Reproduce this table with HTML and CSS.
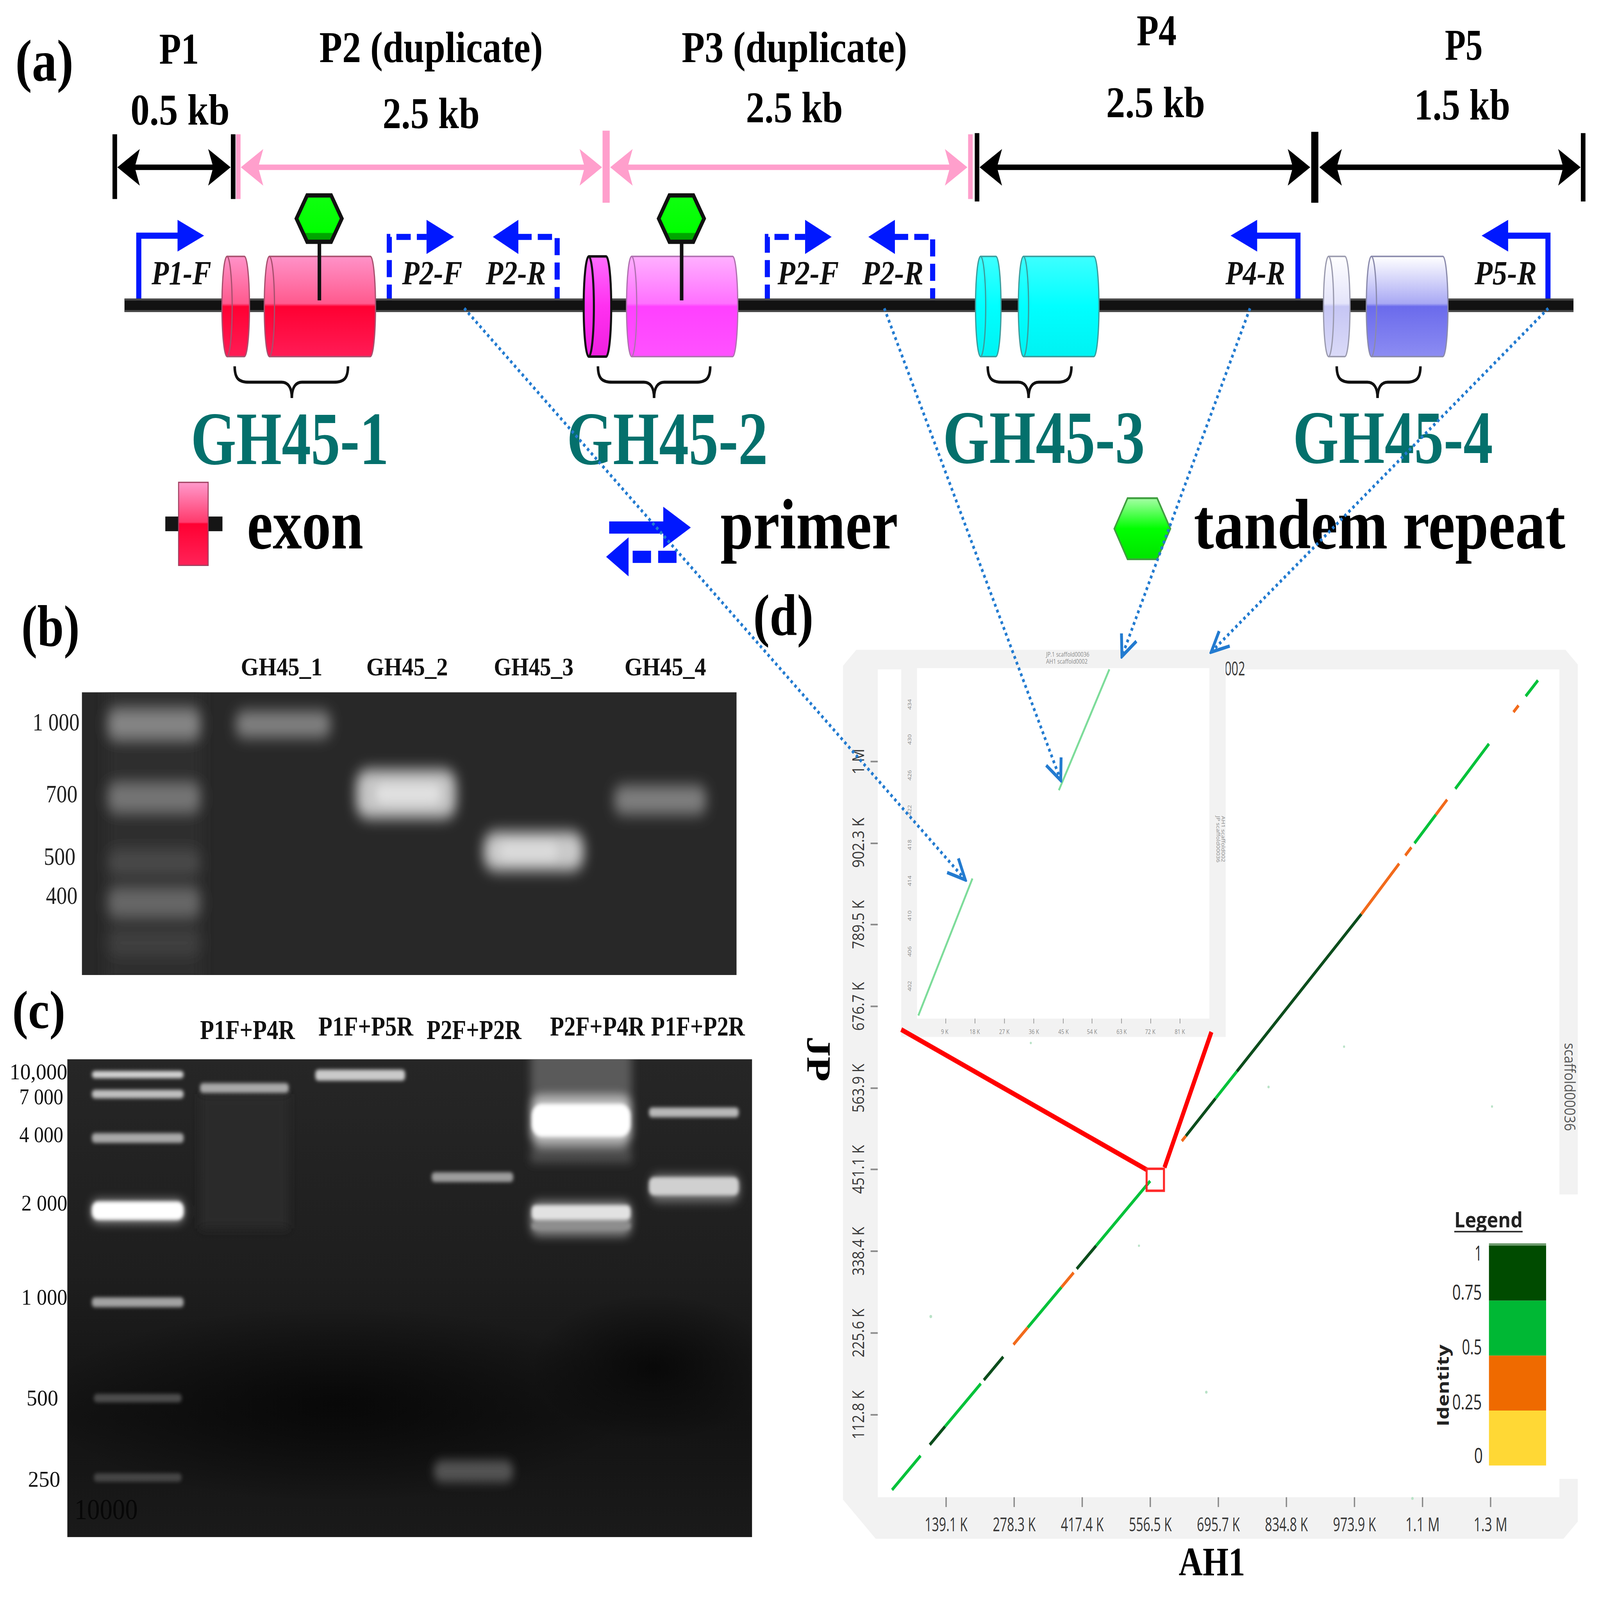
FILE: index.html
```html
<!DOCTYPE html>
<html lang="en">
<head>
<meta charset="utf-8">
<title>GH45 gene cluster figure</title>
<link rel="stylesheet" href="styles.css">
</head>
<body>
<div class="figure">

  <!-- ================= PANEL (a) ================= -->
  <svg class="panel panel-a" viewBox="0 0 1568 480" preserveAspectRatio="none">
    <defs>
      <linearGradient id="gRed" x1="0" y1="0" x2="0" y2="1">
        <stop offset="0" stop-color="#ff92c8"/>
        <stop offset="0.47" stop-color="#ff5a8e"/>
        <stop offset="0.5" stop-color="#ff0032"/>
        <stop offset="1" stop-color="#ff1c56"/>
      </linearGradient>
      <linearGradient id="gMagBig" x1="0" y1="0" x2="0" y2="1">
        <stop offset="0" stop-color="#ffb0ff"/>
        <stop offset="0.47" stop-color="#ff70ff"/>
        <stop offset="0.5" stop-color="#ff40ff"/>
        <stop offset="1" stop-color="#ff52ff"/>
      </linearGradient>
      <linearGradient id="gMagSmall" x1="0" y1="0" x2="0" y2="1">
        <stop offset="0" stop-color="#ff6cff"/>
        <stop offset="0.5" stop-color="#ff30f0"/>
        <stop offset="1" stop-color="#f020e0"/>
      </linearGradient>
      <linearGradient id="gCyan" x1="0" y1="0" x2="0" y2="1">
        <stop offset="0" stop-color="#3dffff"/>
        <stop offset="0.5" stop-color="#00ffff"/>
        <stop offset="1" stop-color="#00f2f2"/>
      </linearGradient>
      <linearGradient id="gLavSmall" x1="0" y1="0" x2="0" y2="1">
        <stop offset="0" stop-color="#ffffff"/>
        <stop offset="0.47" stop-color="#e4e4fa"/>
        <stop offset="0.5" stop-color="#c6c6f4"/>
        <stop offset="1" stop-color="#dadaf8"/>
      </linearGradient>
      <linearGradient id="gLavBig" x1="0" y1="0" x2="0" y2="1">
        <stop offset="0" stop-color="#ffffff"/>
        <stop offset="0.47" stop-color="#a9a9f4"/>
        <stop offset="0.5" stop-color="#6b6bec"/>
        <stop offset="1" stop-color="#8c8cf2"/>
      </linearGradient>
      <linearGradient id="gHex" x1="0" y1="0" x2="0" y2="1">
        <stop offset="0" stop-color="#10ff10"/>
        <stop offset="0.8" stop-color="#00ff00"/>
        <stop offset="0.82" stop-color="#00a800"/>
        <stop offset="1" stop-color="#00a000"/>
      </linearGradient>
      <linearGradient id="gHexLegend" x1="0" y1="0" x2="0" y2="1">
        <stop offset="0" stop-color="#a6ffa6"/>
        <stop offset="0.5" stop-color="#00ff00"/>
        <stop offset="1" stop-color="#00e400"/>
      </linearGradient>
      <linearGradient id="gExonIcon" x1="0" y1="0" x2="0" y2="1">
        <stop offset="0" stop-color="#ff9acc"/>
        <stop offset="0.48" stop-color="#ff3a6c"/>
        <stop offset="0.5" stop-color="#ff0032"/>
        <stop offset="1" stop-color="#ff2358"/>
      </linearGradient>
    </defs>

    <text class="t-panel" x="15" y="66" textLength="57" lengthAdjust="spacingAndGlyphs">(a)</text>

    <!-- segment titles -->
    <text class="t-seg" x="156" y="52" textLength="39" lengthAdjust="spacingAndGlyphs">P1</text>
    <text class="t-seg" x="313" y="51" textLength="219" lengthAdjust="spacingAndGlyphs">P2 (duplicate)</text>
    <text class="t-seg" x="668" y="51" textLength="221" lengthAdjust="spacingAndGlyphs">P3 (duplicate)</text>
    <text class="t-seg" x="1114" y="37" textLength="39" lengthAdjust="spacingAndGlyphs">P4</text>
    <text class="t-seg" x="1416" y="49" textLength="37" lengthAdjust="spacingAndGlyphs">P5</text>
    <text class="t-seg" x="128" y="102" textLength="97" lengthAdjust="spacingAndGlyphs">0.5 kb</text>
    <text class="t-seg" x="375" y="105" textLength="95" lengthAdjust="spacingAndGlyphs">2.5 kb</text>
    <text class="t-seg" x="731" y="100" textLength="95" lengthAdjust="spacingAndGlyphs">2.5 kb</text>
    <text class="t-seg" x="1084" y="96" textLength="97" lengthAdjust="spacingAndGlyphs">2.5 kb</text>
    <text class="t-seg" x="1386" y="98" textLength="94" lengthAdjust="spacingAndGlyphs">1.5 kb</text>

    <!-- scale bars -->
    <g class="bar-black">
      <line x1="112.5" y1="110" x2="112.5" y2="163"/>
      <line x1="228.5" y1="110" x2="228.5" y2="163"/>
      <line x1="130" y1="137" x2="212" y2="137"/>
      <line x1="957.5" y1="109" x2="957.5" y2="165"/>
      <line x1="1288.5" y1="108" x2="1288.5" y2="166" class="thick"/>
      <line x1="1551.5" y1="109" x2="1551.5" y2="165"/>
      <line x1="975" y1="137" x2="1268" y2="137"/>
      <line x1="1308" y1="137" x2="1534" y2="137"/>
    </g>
    <g class="head-black">
      <polygon points="115,137 137,122 132,137 137,152"/>
      <polygon points="226,137 204,122 209,137 204,152"/>
      <polygon points="960,137 982,122 977,137 982,152"/>
      <polygon points="1284,137 1262,122 1267,137 1262,152"/>
      <polygon points="1293,137 1315,122 1310,137 1315,152"/>
      <polygon points="1549,137 1527,122 1532,137 1527,152"/>
    </g>
    <g class="bar-pink">
      <line x1="233.5" y1="110" x2="233.5" y2="163"/>
      <line x1="594" y1="107" x2="594" y2="166" class="thick"/>
      <line x1="951" y1="110" x2="951" y2="163"/>
      <line x1="250" y1="137" x2="575" y2="137"/>
      <line x1="612" y1="137" x2="932" y2="137"/>
    </g>
    <g class="head-pink">
      <polygon points="236,137 258,122 253,137 258,152"/>
      <polygon points="590,137 568,122 573,137 568,152"/>
      <polygon points="598,137 620,122 615,137 620,152"/>
      <polygon points="948,137 926,122 931,137 926,152"/>
    </g>

    <!-- primers -->
    <g class="primer-solid">
      <path d="M136 247 V193 H178"/>
      <path d="M1230 193 H1272 V247"/>
      <path d="M1476 193 H1517 V247"/>
    </g>
    <g class="primer-dash">
      <path d="M381.5 247 V194 H418"/>
      <path d="M507 194 H546 V247"/>
      <path d="M752 247 V194 H789"/>
      <path d="M876 194 H914 V247"/>
    </g>
    <g class="primer-head">
      <polygon points="174,180 200,193 174,206"/>
      <polygon points="418,180 445,194 418,208"/>
      <polygon points="508,180 483,194 508,208"/>
      <polygon points="789,180 815,194 789,208"/>
      <polygon points="877,180 851,194 877,208"/>
      <polygon points="1232,180 1206,193 1232,206"/>
      <polygon points="1478,180 1452,193 1478,206"/>
    </g>
    <text class="t-primer" x="148.5" y="233" textLength="58.5" lengthAdjust="spacingAndGlyphs">P1-F</text>
    <text class="t-primer" x="394" y="233" textLength="59" lengthAdjust="spacingAndGlyphs">P2-F</text>
    <text class="t-primer" x="476" y="233" textLength="59" lengthAdjust="spacingAndGlyphs">P2-R</text>
    <text class="t-primer" x="762" y="233" textLength="60" lengthAdjust="spacingAndGlyphs">P2-F</text>
    <text class="t-primer" x="845" y="233" textLength="60" lengthAdjust="spacingAndGlyphs">P2-R</text>
    <text class="t-primer" x="1201" y="233" textLength="58.5" lengthAdjust="spacingAndGlyphs">P4-R</text>
    <text class="t-primer" x="1445" y="233" textLength="61" lengthAdjust="spacingAndGlyphs">P5-R</text>

    <!-- gene line -->
    <rect class="gene-line" x="122" y="244.5" width="1420" height="11"/>
    <rect class="gene-edge" x="122" y="244.5" width="1420" height="1.6"/>
    <rect class="gene-edge" x="122" y="253.9" width="1420" height="1.6"/>

    <!-- exons -->
    <g class="exon exon-red">
      <path d="M222.5 210 H239.5 A5 41 0 0 1 239.5 292 H222.5 A5 41 0 0 1 222.5 210 Z"/>
      <path class="face" d="M222.5 210 A5 41 0 0 1 222.5 292"/>
      <path d="M264 210 H363 A5 41 0 0 1 363 292 H264 A5 41 0 0 1 264 210 Z"/>
      <path class="face" d="M264 210 A5 41 0 0 1 264 292"/>
    </g>
    <g class="exon exon-mag-small">
      <path d="M577 210 H594 A5 41 0 0 1 594 292 H577 A5 41 0 0 1 577 210 Z"/>
      <path class="face" d="M577 210 A5 41 0 0 1 577 292"/>
    </g>
    <g class="exon exon-mag">
      <path d="M619 210 H718 A5 41 0 0 1 718 292 H619 A5 41 0 0 1 619 210 Z"/>
      <path class="face" d="M619 210 A5 41 0 0 1 619 292"/>
    </g>
    <g class="exon exon-cyan">
      <path d="M961 210 H976 A5 41 0 0 1 976 292 H961 A5 41 0 0 1 961 210 Z"/>
      <path class="face" d="M961 210 A5 41 0 0 1 961 292"/>
      <path d="M1003 210 H1072 A5 41 0 0 1 1072 292 H1003 A5 41 0 0 1 1003 210 Z"/>
      <path class="face" d="M1003 210 A5 41 0 0 1 1003 292"/>
    </g>
    <g class="exon exon-lav-small">
      <path d="M1302 210 H1318 A5 41 0 0 1 1318 292 H1302 A5 41 0 0 1 1302 210 Z"/>
      <path class="face" d="M1302 210 A5 41 0 0 1 1302 292"/>
    </g>
    <g class="exon exon-lav">
      <path d="M1344 210 H1414 A5 41 0 0 1 1414 292 H1344 A5 41 0 0 1 1344 210 Z"/>
      <path class="face" d="M1344 210 A5 41 0 0 1 1344 292"/>
    </g>

    <!-- tandem repeats -->
    <g class="repeat">
      <line x1="313" y1="198" x2="313" y2="246"/>
      <polygon points="290.5,179 301,160 324.5,160 335,179 324.5,198 301,198"/>
      <line x1="668" y1="198" x2="668" y2="246"/>
      <polygon points="645.5,179 656,160 679.5,160 690,179 679.5,198 656,198"/>
    </g>

    <!-- braces -->
    <g class="brace">
      <path d="M230 300 C230 310 234 313 244 313 L276 313 C282 313 286 317 286 326 C286 317 290 313 296 313 L327 313 C337 313 341 310 341 300"/>
      <path d="M586 300 C586 310 590 313 600 313 L631 313 C637 313 641 317 641 326 C641 317 645 313 651 313 L682 313 C692 313 696 310 696 300"/>
      <path d="M968 300 C968 310 972 313 982 313 L998 313 C1004 313 1008 317 1008 326 C1008 317 1012 313 1018 313 L1036 313 C1046 313 1050 310 1050 300"/>
      <path d="M1310 300 C1310 310 1314 313 1324 313 L1340 313 C1346 313 1350 317 1350 326 C1350 317 1354 313 1360 313 L1378 313 C1388 313 1392 310 1392 300"/>
    </g>

    <text class="t-gene" x="187" y="380" textLength="194" lengthAdjust="spacingAndGlyphs">GH45-1</text>
    <text class="t-gene" x="555.5" y="380" textLength="197" lengthAdjust="spacingAndGlyphs">GH45-2</text>
    <text class="t-gene" x="924" y="379" textLength="198" lengthAdjust="spacingAndGlyphs">GH45-3</text>
    <text class="t-gene" x="1267" y="379" textLength="196" lengthAdjust="spacingAndGlyphs">GH45-4</text>

    <!-- legend -->
    <rect class="legend-bar" x="162" y="423" width="56" height="12"/>
    <rect class="legend-exon" x="175" y="395" width="29" height="68"/>
    <text class="t-legend" x="242" y="449" textLength="114" lengthAdjust="spacingAndGlyphs">exon</text>

    <g class="primer-icon">
      <rect x="597" y="427" width="55" height="10"/>
      <polygon points="650,415 677,432 650,449"/>
      <polygon points="594,456 616,440 616,472"/>
      <rect x="620" y="451" width="18" height="10"/>
      <rect x="645" y="451" width="18" height="10"/>
    </g>
    <text class="t-legend" x="706" y="449" textLength="174" lengthAdjust="spacingAndGlyphs">primer</text>

    <polygon class="legend-hex" points="1092,433 1105,408 1134,408 1147,433 1134,458 1105,458"/>
    <text class="t-legend" x="1170" y="449" textLength="364" lengthAdjust="spacingAndGlyphs">tandem repeat</text>
  </svg>

  <div class="lower">
    <div class="left-col">

      <!-- ================= PANEL (b) ================= -->
      <svg class="panel panel-b" viewBox="0 480 737.5 322" preserveAspectRatio="none">
        <defs>
          <filter id="blurB" x="-40%" y="-200%" width="180%" height="500%">
            <feGaussianBlur stdDeviation="6"/>
          </filter>
          <filter id="blurB2" x="-40%" y="-200%" width="180%" height="500%">
            <feGaussianBlur stdDeviation="4"/>
          </filter>
          <clipPath id="clipGelB">
            <rect x="80.3" y="566.8" width="641.5" height="231.5"/>
          </clipPath>
        </defs>
        <text class="t-panel" x="21" y="529" textLength="57" lengthAdjust="spacingAndGlyphs">(b)</text>
        <text class="t-lane" x="236" y="553" textLength="80" lengthAdjust="spacingAndGlyphs">GH45_1</text>
        <text class="t-lane" x="359" y="553" textLength="80" lengthAdjust="spacingAndGlyphs">GH45_2</text>
        <text class="t-lane" x="484" y="553" textLength="78" lengthAdjust="spacingAndGlyphs">GH45_3</text>
        <text class="t-lane" x="612" y="553" textLength="80" lengthAdjust="spacingAndGlyphs">GH45_4</text>

        <rect class="gel-b" x="80.3" y="566.8" width="641.5" height="231.5"/>
        <g clip-path="url(#clipGelB)">
          <g filter="url(#blurB)">
            <rect x="104" y="560" width="94" height="245" fill="#2d2d2d"/>
            <rect x="106" y="582" width="90" height="22" rx="8" fill="#868686"/>
            <rect x="106" y="642" width="90" height="22" rx="8" fill="#767676"/>
            <rect x="106" y="696" width="90" height="20" rx="8" fill="#4a4a4a"/>
            <rect x="106" y="728" width="90" height="22" rx="8" fill="#686868"/>
            <rect x="106" y="762" width="90" height="20" rx="8" fill="#404040"/>
            <rect x="231" y="582" width="93" height="22" rx="8" fill="#808080"/>
            <rect x="349" y="630" width="98" height="40" rx="12" fill="#c6c6c6"/>
            <rect x="474" y="681" width="98" height="32" rx="12" fill="#cacaca"/>
            <rect x="602" y="643" width="90" height="24" rx="8" fill="#7e7e7e"/>
          </g>
          <g filter="url(#blurB2)">
            <rect x="368" y="642" width="64" height="16" rx="8" fill="#e0e0e0"/>
            <rect x="490" y="691" width="56" height="12" rx="6" fill="#dcdcdc"/>
          </g>
        </g>

        <text class="t-ladder" x="32" y="598" textLength="46" lengthAdjust="spacingAndGlyphs">1 000</text>
        <text class="t-ladder" x="45" y="657" textLength="31" lengthAdjust="spacingAndGlyphs">700</text>
        <text class="t-ladder" x="43" y="708" textLength="31" lengthAdjust="spacingAndGlyphs">500</text>
        <text class="t-ladder" x="45" y="740" textLength="31" lengthAdjust="spacingAndGlyphs">400</text>
      </svg>

      <!-- ================= PANEL (c) ================= -->
      <svg class="panel panel-c" viewBox="0 802 737.5 508.3" preserveAspectRatio="none">
        <defs>
          <linearGradient id="gGelC" x1="0" y1="0" x2="0" y2="1">
            <stop offset="0" stop-color="#262626"/>
            <stop offset="0.45" stop-color="#1e1e1e"/>
            <stop offset="0.75" stop-color="#131313"/>
            <stop offset="1" stop-color="#1a1a1a"/>
          </linearGradient>
          <radialGradient id="gDark" cx="0.5" cy="0.5" r="0.5">
            <stop offset="0" stop-color="#050505" stop-opacity="0.8"/>
            <stop offset="1" stop-color="#050505" stop-opacity="0"/>
          </radialGradient>
          <filter id="blurC" x="-30%" y="-200%" width="160%" height="500%">
            <feGaussianBlur stdDeviation="1.6"/>
          </filter>
          <filter id="blurC2" x="-40%" y="-200%" width="180%" height="500%">
            <feGaussianBlur stdDeviation="4"/>
          </filter>
          <clipPath id="clipGelC">
            <rect x="66" y="867.5" width="671" height="391.3"/>
          </clipPath>
        </defs>
        <text class="t-panel-c" x="12" y="842" textLength="52" lengthAdjust="spacingAndGlyphs">(c)</text>
        <text class="t-lane-c" x="196" y="851" textLength="93" lengthAdjust="spacingAndGlyphs">P1F+P4R</text>
        <text class="t-lane-c" x="312" y="848" textLength="93" lengthAdjust="spacingAndGlyphs">P1F+P5R</text>
        <text class="t-lane-c" x="418" y="851" textLength="93" lengthAdjust="spacingAndGlyphs">P2F+P2R</text>
        <text class="t-lane-c" x="539" y="848" textLength="93" lengthAdjust="spacingAndGlyphs">P2F+P4R</text>
        <text class="t-lane-c" x="638" y="848" textLength="92" lengthAdjust="spacingAndGlyphs">P1F+P2R</text>

        <rect x="66" y="867.5" width="671" height="391.3" fill="url(#gGelC)"/>
        <g clip-path="url(#clipGelC)">
          <ellipse cx="330" cy="1150" rx="290" ry="80" fill="url(#gDark)"/>
          <ellipse cx="640" cy="1120" rx="120" ry="60" fill="url(#gDark)"/>

          <g filter="url(#blurC2)">
            <rect x="196" y="896" width="87" height="110" fill="#2a2a2a"/>
            <rect x="520" y="860" width="99" height="50" fill="#5a5a5a"/>
            <rect x="90" y="983" width="90" height="18" rx="6" fill="#9a9a9a"/>
            <rect x="425" y="1196" width="78" height="18" rx="8" fill="#525252"/>
            <rect x="520" y="898" width="99" height="40" rx="10" fill="#bdbdbd"/>
            <rect x="520" y="940" width="99" height="12" fill="#505050"/>
            <rect x="520" y="984" width="99" height="28" rx="8" fill="#8a8a8a"/>
            <rect x="637" y="962" width="88" height="22" rx="8" fill="#767676"/>
          </g>
          <g filter="url(#blurC)">
            <rect x="90" y="877" width="90" height="6" rx="3" fill="#d2d2d2"/>
            <rect x="90" y="892.5" width="90" height="7" rx="3" fill="#c0c0c0"/>
            <rect x="90" y="928" width="90" height="8" rx="3" fill="#a8a8a8"/>
            <rect x="90" y="984" width="90" height="15" rx="6" fill="#ffffff"/>
            <rect x="90" y="1062.5" width="90" height="8" rx="3" fill="#a2a2a2"/>
            <rect x="92" y="1141.5" width="86" height="7" rx="3" fill="#4c4c4c"/>
            <rect x="92" y="1206.5" width="86" height="7" rx="3" fill="#444444"/>
            <rect x="196" y="887" width="87" height="8" rx="3" fill="#a8a8a8"/>
            <rect x="309" y="876" width="88" height="9" rx="3" fill="#cacaca"/>
            <rect x="423" y="960" width="80" height="8" rx="3" fill="#9c9c9c"/>
            <rect x="521" y="904" width="97" height="27" rx="10" fill="#ffffff"/>
            <rect x="521" y="987" width="97" height="12" rx="4" fill="#e2e2e2"/>
            <rect x="521" y="1001" width="97" height="6" rx="3" fill="#8e8e8e"/>
            <rect x="636" y="907" width="88" height="8" rx="3" fill="#b8b8b8"/>
            <rect x="636" y="964" width="88" height="15" rx="5" fill="#d0d0d0"/>
          </g>
        </g>

        <text class="t-gelmark" x="73" y="1244" textLength="62" lengthAdjust="spacingAndGlyphs">10000</text>

        <text class="t-ladder-c" x="9.5" y="884" textLength="56.5" lengthAdjust="spacingAndGlyphs">10,000</text>
        <text class="t-ladder-c" x="19" y="904.5" textLength="43" lengthAdjust="spacingAndGlyphs">7 000</text>
        <text class="t-ladder-c" x="19" y="935.5" textLength="43" lengthAdjust="spacingAndGlyphs">4 000</text>
        <text class="t-ladder-c" x="21" y="991.5" textLength="45" lengthAdjust="spacingAndGlyphs">2 000</text>
        <text class="t-ladder-c" x="21" y="1068.5" textLength="45" lengthAdjust="spacingAndGlyphs">1 000</text>
        <text class="t-ladder-c" x="26" y="1151" textLength="31" lengthAdjust="spacingAndGlyphs">500</text>
        <text class="t-ladder-c" x="27.5" y="1217.5" textLength="31.5" lengthAdjust="spacingAndGlyphs">250</text>
      </svg>
    </div>

    <!-- ================= PANEL (d) ================= -->
    <svg class="panel panel-d" viewBox="737.5 480 830.5 830.3" preserveAspectRatio="none">
      <text class="t-panel" x="738" y="520" textLength="59" lengthAdjust="spacingAndGlyphs">(d)</text>

      <!-- outer frame -->
      <polygon class="frame" points="826,545 839,532 1534,532 1546,544 1546,1246 1532,1260 858,1260 826,1228"/>
      <rect class="plot-bg" x="860" y="548" width="668" height="678"/>
      <rect class="plot-bg" x="1527" y="978" width="20" height="233"/>

      <!-- y ticks -->
      <g class="tick-mark">
        <line x1="853" y1="1158.5" x2="860" y2="1158.5"/>
        <line x1="853" y1="1091.5" x2="860" y2="1091.5"/>
        <line x1="853" y1="1024.5" x2="860" y2="1024.5"/>
        <line x1="853" y1="957.5" x2="860" y2="957.5"/>
        <line x1="853" y1="891" x2="860" y2="891"/>
        <line x1="853" y1="824" x2="860" y2="824"/>
        <line x1="853" y1="757" x2="860" y2="757"/>
        <line x1="853" y1="690.5" x2="860" y2="690.5"/>
        <line x1="853" y1="623.5" x2="860" y2="623.5"/>
      </g>
      <g class="t-tick">
        <text transform="translate(840.5 1158.5) rotate(-90)" x="-20" y="6" textLength="40" lengthAdjust="spacingAndGlyphs">112.8 K</text>
        <text transform="translate(840.5 1091.5) rotate(-90)" x="-20" y="6" textLength="40" lengthAdjust="spacingAndGlyphs">225.6 K</text>
        <text transform="translate(840.5 1024.5) rotate(-90)" x="-20" y="6" textLength="40" lengthAdjust="spacingAndGlyphs">338.4 K</text>
        <text transform="translate(840.5 957.5) rotate(-90)" x="-20" y="6" textLength="40" lengthAdjust="spacingAndGlyphs">451.1 K</text>
        <text transform="translate(840.5 891) rotate(-90)" x="-20" y="6" textLength="40" lengthAdjust="spacingAndGlyphs">563.9 K</text>
        <text transform="translate(840.5 824) rotate(-90)" x="-20" y="6" textLength="40" lengthAdjust="spacingAndGlyphs">676.7 K</text>
        <text transform="translate(840.5 757) rotate(-90)" x="-20" y="6" textLength="40" lengthAdjust="spacingAndGlyphs">789.5 K</text>
        <text transform="translate(840.5 690.5) rotate(-90)" x="-20" y="6" textLength="41" lengthAdjust="spacingAndGlyphs">902.3 K</text>
        <text transform="translate(840.5 623.5) rotate(-90)" x="-10.5" y="6" textLength="21" lengthAdjust="spacingAndGlyphs">1 M</text>
      </g>

      <!-- x ticks -->
      <g class="tick-mark">
        <line x1="927" y1="1226" x2="927" y2="1234"/>
        <line x1="993.7" y1="1226" x2="993.7" y2="1234"/>
        <line x1="1060.4" y1="1226" x2="1060.4" y2="1234"/>
        <line x1="1127.1" y1="1226" x2="1127.1" y2="1234"/>
        <line x1="1193.8" y1="1226" x2="1193.8" y2="1234"/>
        <line x1="1260.5" y1="1226" x2="1260.5" y2="1234"/>
        <line x1="1327.2" y1="1226" x2="1327.2" y2="1234"/>
        <line x1="1393.9" y1="1226" x2="1393.9" y2="1234"/>
        <line x1="1460.6" y1="1226" x2="1460.6" y2="1234"/>
      </g>
      <g class="t-tick">
        <text x="906" y="1254" textLength="42" lengthAdjust="spacingAndGlyphs">139.1 K</text>
        <text x="972.7" y="1254" textLength="42" lengthAdjust="spacingAndGlyphs">278.3 K</text>
        <text x="1039.4" y="1254" textLength="42" lengthAdjust="spacingAndGlyphs">417.4 K</text>
        <text x="1106.1" y="1254" textLength="42" lengthAdjust="spacingAndGlyphs">556.5 K</text>
        <text x="1172.8" y="1254" textLength="42" lengthAdjust="spacingAndGlyphs">695.7 K</text>
        <text x="1239.5" y="1254" textLength="42" lengthAdjust="spacingAndGlyphs">834.8 K</text>
        <text x="1306.2" y="1254" textLength="42" lengthAdjust="spacingAndGlyphs">973.9 K</text>
        <text x="1377.2" y="1254" textLength="33.5" lengthAdjust="spacingAndGlyphs">1.1 M</text>
        <text x="1444" y="1254" textLength="33" lengthAdjust="spacingAndGlyphs">1.3 M</text>
      </g>

      <text class="t-axis" x="1155" y="1290" textLength="65" lengthAdjust="spacingAndGlyphs">AH1</text>
      <text class="t-axis" transform="translate(802 867) rotate(90)" x="-18.5" y="11" textLength="37" lengthAdjust="spacingAndGlyphs">JP</text>

      <text class="t-tick" x="1200" y="553" textLength="20" lengthAdjust="spacingAndGlyphs">002</text>
      <text class="t-scaffold" transform="translate(1538 890) rotate(90)" x="-36" y="5" textLength="72" lengthAdjust="spacingAndGlyphs">scaffold00036</text>

      <!-- faint noise dots -->
      <g class="noise">
        <circle cx="912" cy="1078" r="1.3"/>
        <circle cx="1182" cy="1140" r="1.2"/>
        <circle cx="1384" cy="1227" r="1.2"/>
        <circle cx="1010" cy="854" r="1"/>
        <circle cx="1243" cy="890" r="1.1"/>
        <circle cx="1317" cy="857" r="1"/>
        <circle cx="1116" cy="1020" r="1"/>
        <circle cx="1462" cy="906" r="1"/>
      </g>

      <!-- main diagonal -->
      <g class="diag">
        <line class="dg" x1="874" y1="1220" x2="902" y2="1192"/>
        <line class="dd" x1="911" y1="1183" x2="926" y2="1168"/>
        <line class="dg" x1="926" y1="1168" x2="961" y2="1133"/>
        <line class="dd" x1="964" y1="1130" x2="983" y2="1111"/>
        <line class="do" x1="993" y1="1101" x2="1007" y2="1087"/>
        <line class="dg" x1="1007" y1="1087" x2="1040" y2="1054"/>
        <line class="do" x1="1040" y1="1054" x2="1052" y2="1042"/>
        <line class="dd" x1="1055" y1="1039" x2="1074" y2="1020"/>
        <line class="dg" x1="1074" y1="1020" x2="1127" y2="967"/>
        <line class="do" x1="1158" y1="934.3" x2="1162" y2="930.1"/>
        <line class="dd" x1="1162" y1="930.1" x2="1191" y2="899.4"/>
        <line class="dg" x1="1191" y1="899.4" x2="1212" y2="877.2"/>
        <line class="dd" x1="1212" y1="877.2" x2="1334" y2="748.4"/>
        <line class="do" x1="1334" y1="748.4" x2="1371" y2="707.1"/>
        <line class="do" x1="1377" y1="700.4" x2="1383" y2="693.8"/>
        <line class="dg" x1="1386" y1="690.4" x2="1407" y2="667"/>
        <line class="do" x1="1407" y1="667" x2="1418" y2="654.7"/>
        <line class="dg" x1="1426" y1="645.8" x2="1459" y2="609"/>
        <line class="do" x1="1483" y1="583" x2="1488" y2="577.6"/>
        <line class="dg" x1="1495" y1="570" x2="1507" y2="557"/>
      </g>

      <!-- inset -->
      <polygon class="frame" points="883,545 895,533 1201,533 1201,849 883,849"/>
      <rect class="plot-bg" x="898.5" y="547" width="286.5" height="287"/>
      <g class="t-tiny">
        <text x="1025" y="537.5">JP.1 scaffold00036</text>
        <text x="1025" y="543.5">AH1 scaffold0002</text>
        <text x="922" y="846.5">9 K</text>
        <text x="950" y="846.5">18 K</text>
        <text x="979" y="846.5">27 K</text>
        <text x="1008" y="846.5">36 K</text>
        <text x="1037" y="846.5">45 K</text>
        <text x="1065" y="846.5">54 K</text>
        <text x="1094" y="846.5">63 K</text>
        <text x="1122" y="846.5">72 K</text>
        <text x="1151" y="846.5">81 K</text>
        <text transform="translate(891 806.7) rotate(-90)" x="-5" y="2">402</text>
        <text transform="translate(891 778.3) rotate(-90)" x="-5" y="2">406</text>
        <text transform="translate(891 749) rotate(-90)" x="-5" y="2">410</text>
        <text transform="translate(891 720.5) rotate(-90)" x="-5" y="2">414</text>
        <text transform="translate(891 691) rotate(-90)" x="-5" y="2">418</text>
        <text transform="translate(891 662.6) rotate(-90)" x="-5" y="2">422</text>
        <text transform="translate(891 634) rotate(-90)" x="-5" y="2">426</text>
        <text transform="translate(891 604.7) rotate(-90)" x="-5" y="2">430</text>
        <text transform="translate(891 576) rotate(-90)" x="-5" y="2">434</text>
        <text transform="translate(1192 690) rotate(90)" x="-22" y="0">JP scaffold00036</text>
        <text transform="translate(1192 690) rotate(90)" x="-22" y="-5">AH1 scaffold002</text>
      </g>
      <g class="tick-mark thin">
        <line x1="926.7" y1="834" x2="926.7" y2="838"/>
        <line x1="955.3" y1="834" x2="955.3" y2="838"/>
        <line x1="984.2" y1="834" x2="984.2" y2="838"/>
        <line x1="1012.9" y1="834" x2="1012.9" y2="838"/>
        <line x1="1041.8" y1="834" x2="1041.8" y2="838"/>
        <line x1="1070" y1="834" x2="1070" y2="838"/>
        <line x1="1098.9" y1="834" x2="1098.9" y2="838"/>
        <line x1="1127.5" y1="834" x2="1127.5" y2="838"/>
        <line x1="1156.2" y1="834" x2="1156.2" y2="838"/>
      </g>
      <g class="inset-line">
        <line x1="899.8" y1="831.5" x2="952.8" y2="719.3"/>
        <line x1="1037.5" y1="647" x2="1087" y2="548"/>
      </g>

      <!-- zoom indicator -->
      <g class="zoom-red">
        <line x1="1124" y1="958" x2="883" y2="843"/>
        <line x1="1141" y1="956" x2="1187" y2="845"/>
      </g>
      <rect class="zoom-box" x="1123.5" y="957" width="17" height="18"/>

      <!-- legend -->
      <text class="t-legend-title" x="1425" y="1005" textLength="67" lengthAdjust="spacingAndGlyphs">Legend</text>
      <line class="legend-underline" x1="1425" y1="1008.5" x2="1492" y2="1008.5"/>
      <rect x="1459" y="1018" width="56" height="3" fill="#6c9a6c"/>
      <rect x="1459" y="1020" width="56" height="45" fill="#004b00"/>
      <rect x="1459" y="1065" width="56" height="45" fill="#00b834"/>
      <rect x="1459" y="1110" width="56" height="45" fill="#ef6a00"/>
      <rect x="1459" y="1155" width="56" height="45" fill="#ffd835"/>
      <g class="t-legend-num">
        <text x="1445" y="1032" textLength="7" lengthAdjust="spacingAndGlyphs">1</text>
        <text x="1423" y="1064" textLength="29" lengthAdjust="spacingAndGlyphs">0.75</text>
        <text x="1432.5" y="1109" textLength="19.5" lengthAdjust="spacingAndGlyphs">0.5</text>
        <text x="1423" y="1154" textLength="29" lengthAdjust="spacingAndGlyphs">0.25</text>
        <text x="1444.5" y="1198" textLength="8.5" lengthAdjust="spacingAndGlyphs">0</text>
      </g>
      <text class="t-identity" transform="translate(1413.5 1134.5) rotate(-90)" x="-33.5" y="6" textLength="67" lengthAdjust="spacingAndGlyphs">Identity</text>
    </svg>
  </div>

  <!-- ================= connecting dotted arrows (overlay) ================= -->
  <svg class="overlay" viewBox="0 0 1568 1310.3" preserveAspectRatio="none">
    <defs>
      <marker id="vhead" viewBox="0 0 22 22" refX="20" refY="11" markerWidth="22" markerHeight="22" markerUnits="userSpaceOnUse" orient="auto">
        <path d="M3 3 L20 11 L3 19" fill="none" stroke="#237bd0" stroke-width="2.8"/>
      </marker>
    </defs>
    <g class="link">
      <path d="M455 252.5 L946 720.5" marker-end="url(#vhead)"/>
      <path d="M866.6 252.5 L1039.5 639" marker-end="url(#vhead)"/>
      <path d="M1225 252.5 L1099.5 537.5" marker-end="url(#vhead)"/>
      <path d="M1517.3 252.5 L1187 534" marker-end="url(#vhead)"/>
    </g>
  </svg>
</div>
</body>
</html>
```

FILE: styles.css
```css
html, body {
  margin: 0;
  padding: 0;
  background: #ffffff;
  overflow: hidden;
}

/* The figure fills the browser window (design: 1568 x 1310.3 units,
   i.e. the 5080 x 4245 frame). */
.figure {
  position: relative;
  width: 100vw;
  height: 100vh;
  display: flex;
  flex-direction: column;
  background: #ffffff;
  overflow: hidden;
}

.panel {
  display: block;
  overflow: visible;
  flex: none;
}

.panel-a { width: 100vw; height: 36.634vh; }

.lower {
  display: flex;
  flex-direction: row;
  height: 63.366vh;
}

.left-col {
  display: flex;
  flex-direction: column;
}

.panel-b { width: 47.034vw; height: 24.575vh; }
.panel-c { width: 47.034vw; height: 38.791vh; }
.panel-d { width: 52.966vw; height: 63.366vh; }

.overlay {
  position: absolute;
  left: 0;
  top: 0;
  width: 100%;
  height: 100%;
  pointer-events: none;
}

/* ---------- text ---------- */
.t-panel {
  font-family: "Liberation Serif", "Times New Roman", serif;
  font-weight: bold;
  font-size: 48px;
  fill: #000;
}
.t-panel-c {
  font-family: "Liberation Serif", "Times New Roman", serif;
  font-weight: bold;
  font-size: 44px;
  fill: #000;
}
.t-seg {
  font-family: "Liberation Serif", "Times New Roman", serif;
  font-weight: bold;
  font-size: 36px;
  fill: #000;
}
.t-primer {
  font-family: "Liberation Serif", "Times New Roman", serif;
  font-weight: bold;
  font-style: italic;
  font-size: 28px;
  fill: #111;
}
.t-gene {
  font-family: "Liberation Serif", "Times New Roman", serif;
  font-weight: bold;
  font-size: 62px;
  fill: #04706c;
}
.t-legend {
  font-family: "Liberation Serif", "Times New Roman", serif;
  font-weight: bold;
  font-size: 58px;
  fill: #000;
}
.t-lane {
  font-family: "Liberation Serif", "Times New Roman", serif;
  font-weight: bold;
  font-size: 21px;
  fill: #111;
}
.t-lane-c {
  font-family: "Liberation Serif", "Times New Roman", serif;
  font-weight: bold;
  font-size: 22px;
  fill: #111;
}
.t-ladder {
  font-family: "Liberation Serif", "Times New Roman", serif;
  font-size: 20px;
  fill: #222;
}
.t-ladder-c {
  font-family: "Liberation Serif", "Times New Roman", serif;
  font-size: 18px;
  fill: #111;
}
.t-gelmark {
  font-family: "Liberation Serif", "Times New Roman", serif;
  font-size: 24px;
  fill: #070707;
}
.t-axis {
  font-family: "Liberation Serif", "Times New Roman", serif;
  font-weight: bold;
  font-size: 33px;
  fill: #000;
}
.t-tick {
  font-family: "Open Sans", "DejaVu Sans", sans-serif;
  font-size: 16px;
  fill: #383838;
}
.t-scaffold {
  font-family: "Open Sans", "DejaVu Sans", sans-serif;
  font-size: 15px;
  fill: #555;
}
.t-tiny {
  font-family: "Open Sans", "DejaVu Sans", sans-serif;
  font-size: 5px;
  fill: #8a8a8a;
}
.t-legend-title {
  font-family: "Open Sans", "DejaVu Sans", sans-serif;
  font-weight: bold;
  font-size: 17px;
  fill: #222;
}
.t-legend-num {
  font-family: "Open Sans", "DejaVu Sans", sans-serif;
  font-size: 17px;
  fill: #2a2a2a;
}
.t-identity {
  font-family: "Open Sans", "DejaVu Sans", sans-serif;
  font-weight: bold;
  font-size: 16px;
  fill: #222;
}

/* ---------- panel (a) graphics ---------- */
.bar-black line { stroke: #000; stroke-width: 4.5; }
.bar-pink line { stroke: #ff9fcc; stroke-width: 4.5; }
.bar-black line.thick, .bar-pink line.thick { stroke-width: 7; }
.head-black polygon { fill: #000; }
.head-pink polygon { fill: #ff9fcc; }

.primer-solid path {
  fill: none;
  stroke: #0018ff;
  stroke-width: 5;
  stroke-linejoin: miter;
}
.primer-dash path {
  fill: none;
  stroke: #0018ff;
  stroke-width: 5;
  stroke-dasharray: 14 6;
  stroke-linejoin: miter;
}
.primer-head polygon { fill: #0018ff; }

.gene-line { fill: #121212; }
.gene-edge { fill: #4a4a4a; }

.exon path { stroke-width: 1.2; }
.exon-red path { fill: url(#gRed); stroke: #a8506e; }
.exon-mag path { fill: url(#gMagBig); stroke: #b070b0; }
.exon-mag-small path { fill: url(#gMagSmall); stroke: #111; stroke-width: 2; }
.exon-cyan path { fill: url(#gCyan); stroke: #3a9c9c; }
.exon-lav-small path { fill: url(#gLavSmall); stroke: #9a9aae; }
.exon-lav path { fill: url(#gLavBig); stroke: #8a8aac; }
.exon path.face { fill: none; }

.repeat line { stroke: #111; stroke-width: 3.5; }
.repeat polygon {
  fill: url(#gHex);
  stroke: #111;
  stroke-width: 3.5;
  stroke-linejoin: miter;
}

.brace path {
  fill: none;
  stroke: #111;
  stroke-width: 2.5;
}

.legend-bar { fill: #151515; }
.legend-exon { fill: url(#gExonIcon); stroke: #a04060; stroke-width: 1; }
.primer-icon rect, .primer-icon polygon { fill: #0018ff; }
.legend-hex { fill: url(#gHexLegend); stroke: #3f9f3f; stroke-width: 1.5; }

/* ---------- gels ---------- */
.gel-b { fill: #282828; }

/* ---------- dot plot ---------- */
.frame { fill: #f2f2f2; }
.plot-bg { fill: #ffffff; }
.tick-mark line { stroke: #8a8a8a; stroke-width: 1.3; }
.tick-mark.thin line { stroke-width: 0.6; }
.noise circle { fill: #b9e2c7; }

.diag line { stroke-width: 2.6; stroke-linecap: butt; }
.diag .dg { stroke: #00c23a; }
.diag .dd { stroke: #0b4d1c; }
.diag .do { stroke: #f26a1b; }

.inset-line line { stroke: #7ddc9a; stroke-width: 1.8; }

.zoom-red line { stroke: #ff0000; stroke-width: 4; }
.zoom-box { fill: none; stroke: #ff2a2a; stroke-width: 2; }

.legend-underline { stroke: #333; stroke-width: 1.3; }

/* ---------- overlay ---------- */
.link path {
  fill: none;
  stroke: #237bd0;
  stroke-width: 2.6;
  stroke-dasharray: 2.4 2.8;
}
```
